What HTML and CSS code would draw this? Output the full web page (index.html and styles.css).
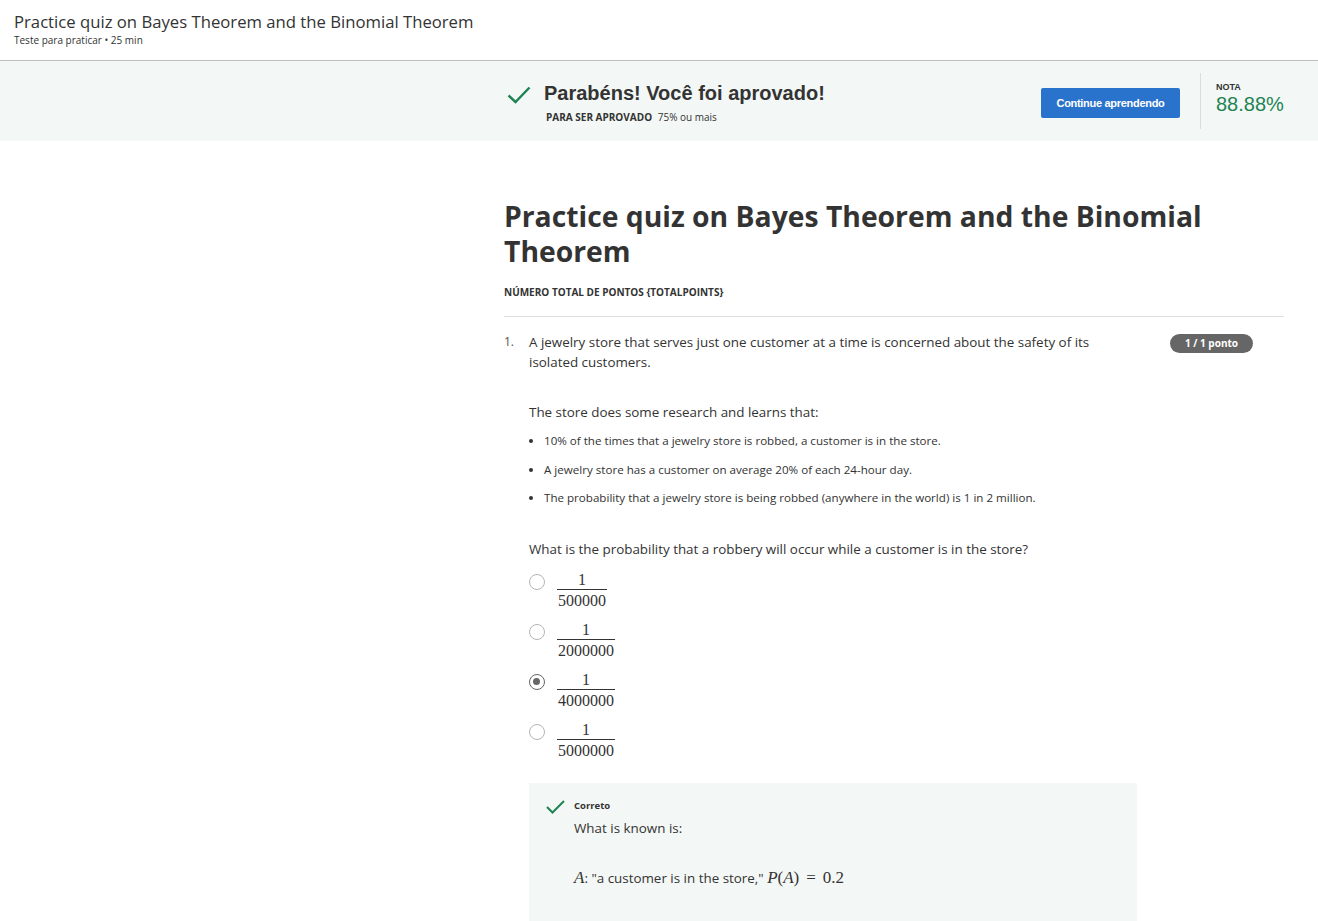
FILE: index.html
```html
<!DOCTYPE html>
<html lang="pt">
<head>
<meta charset="utf-8">
<title>Practice quiz</title>
<link rel="stylesheet" href="styles.css">
</head>
<body>
<header class="top">
  <div class="top-title">Practice quiz on Bayes Theorem and the Binomial Theorem</div>
  <div class="top-sub">Teste para praticar • 25 min</div>
</header>
<section class="banner">
  <div class="banner-inner">
    <svg class="check-big" width="24" height="18" viewBox="0 0 24 18"><path d="M1.5 9.5 L8.5 16 L22.5 1.5" fill="none" stroke="#1f8354" stroke-width="2.4"/></svg>
    <div class="banner-text">
      <div class="banner-title">Parabéns! Você foi aprovado!</div>
      <div class="banner-req"><b>PARA SER APROVADO</b> 75% ou mais</div>
    </div>
    <button class="btn">Continue aprendendo</button>
    <div class="grade">
      <div class="grade-label">NOTA</div>
      <div class="grade-value">88.88%</div>
    </div>
  </div>
</section>
<main class="main">
  <div class="content">
    <h1 class="quiz-title">Practice quiz on Bayes Theorem and the Binomial Theorem</h1>
    <div class="total">NÚMERO TOTAL DE PONTOS {TOTALPOINTS}</div>
    <div class="question">
      <div class="qnum">1.</div>
      <div class="qbody">
        <p class="qtext stem">A jewelry store that serves just one customer at a time is concerned about the safety of its isolated customers.</p>
        <p class="qtext para">The store does some research and learns that:</p>
        <ul class="facts">
          <li>10% of the times that a jewelry store is robbed, a customer is in the store.</li>
          <li>A jewelry store has a customer on average 20% of each 24-hour day.</li>
          <li>The probability that a jewelry store is being robbed (anywhere in the world) is 1 in 2 million.</li>
        </ul>
        <p class="qtext ask">What is the probability that a robbery will occur while a customer is in the store?</p>
        <div class="options">
          <div class="opt"><span class="radio"></span><span class="frac"><span class="num">1</span><span class="den">500000</span></span></div>
          <div class="opt"><span class="radio"></span><span class="frac"><span class="num">1</span><span class="den">2000000</span></span></div>
          <div class="opt"><span class="radio on"></span><span class="frac"><span class="num">1</span><span class="den">4000000</span></span></div>
          <div class="opt"><span class="radio"></span><span class="frac"><span class="num">1</span><span class="den">5000000</span></span></div>
        </div>
        <div class="feedback">
          <svg class="check-small" width="19" height="14" viewBox="0 0 19 14"><path d="M1 7 L6.5 12.5 L18 1" fill="none" stroke="#1f8354" stroke-width="2"/></svg>
          <div class="fb-body">
            <div class="fb-label">Correto</div>
            <p class="qtext fb-known">What is known is:</p>
            <p class="qtext math-line"><span class="m it">A</span>: "a customer is in the store," <span class="m"><span class="it">P</span>(<span class="it">A</span>)<span class="eq">=</span>0.2</span></p>
          </div>
        </div>
      </div>
      <div class="badge">1 / 1 ponto</div>
    </div>
  </div>
</main>
</body>
</html>
```

FILE: styles.css
```css
* { box-sizing: border-box; }
html, body { margin: 0; padding: 0; }
body {
  font-family: "Open Sans", "Liberation Sans", sans-serif;
  color: #333;
  background: #fff;
}
.top {
  height: 61px;
  padding: 11px 14px 0;
  border-bottom: 1px solid #bdbdbd;
}
.top-title {
  font-size: 16.7px;
  line-height: 22px;
  color: #333;
}
.top-sub {
  font-size: 10px;
  line-height: 14px;
  color: #333;
}
.banner {
  background: #f3f8f6;
  height: 80px;
}
.banner-inner {
  margin-left: 507px;
  width: 777px;
  height: 80px;
  display: flex;
  align-items: flex-start;
}
.check-big { margin-top: 25px; flex: none; }
.banner-text { margin-left: 13px; margin-top: 19px; flex: 1; }
.banner-title {
  font-family: "Liberation Sans", Arial, sans-serif;
  font-weight: bold;
  font-size: 20px;
  line-height: 26px;
  color: #333;
}
.banner-req {
  margin-top: 4px;
  margin-left: 2px;
  font-size: 10px;
  line-height: 14px;
  color: #333;
}
.banner-req b { margin-right: 3px; }
.btn {
  margin-top: 27px;
  width: 139px;
  height: 30px;
  background: #2a73cc;
  border: none;
  border-radius: 2px;
  color: #fff;
  font-family: "Liberation Sans", Arial, sans-serif;
  font-weight: bold;
  font-size: 11px;
  letter-spacing: -0.3px;
  padding: 0;
}
.grade {
  margin-left: 20px;
  margin-top: 12px;
  height: 56px;
  border-left: 1px solid #dcdcdc;
  padding: 8px 0 0 15px;
  width: 84px;
}
.grade-label {
  font-family: "Liberation Sans", Arial, sans-serif;
  font-weight: bold;
  font-size: 9px;
  color: #333;
  line-height: 12px;
}
.grade-value {
  font-family: "Liberation Sans", Arial, sans-serif;
  font-size: 20px;
  line-height: 22px;
  color: #1f8354;
}
.main { padding-left: 504px; }
.content { width: 780px; }
.quiz-title {
  margin: 58px 0 0;
  font-size: 28.3px;
  line-height: 35px;
  font-weight: 700;
  color: #333;
  width: 720px;
}
.total {
  margin-top: 16px;
  font-size: 10px;
  font-weight: 700;
  line-height: 14px;
  padding-bottom: 17px;
  border-bottom: 1px solid #ddd;
}
.question {
  display: flex;
  padding-top: 15px;
}
.qnum {
  width: 25px;
  font-size: 12px;
  line-height: 20px;
  color: #555;
  flex: none;
}
.qbody { width: 608px; flex: none; }
.qtext {
  margin: 0;
  font-size: 13.4px;
  line-height: 20px;
  color: #333;
}
.stem { max-width: 575px; }
.para { margin-top: 30px; }
.facts {
  margin: 11px 0 0;
  padding-left: 15px;
  font-size: 11.6px;
  line-height: 16px;
}
.facts li { margin-bottom: 12.5px; }
.ask { margin-top: 33px; }
.options { margin-top: 11px; }
.opt {
  display: flex;
  align-items: flex-start;
  height: 50px;
}
.radio {
  width: 16px;
  height: 16px;
  border-radius: 50%;
  border: 1.5px solid #b5b5b5;
  margin-top: 4px;
  flex: none;
  position: relative;
}
.radio.on { border-color: #666; }
.radio.on::after {
  content: "";
  position: absolute;
  left: 3px; top: 3px;
  width: 7px; height: 7px;
  border-radius: 50%;
  background: #666;
}
.frac {
  margin-left: 12px;
  display: inline-flex;
  flex-direction: column;
  align-items: center;
  font-family: "Liberation Serif", "DejaVu Serif", serif;
  font-size: 16px;
  line-height: 19px;
  color: #333;
}
.num { padding: 0 1px; }
.den {
  border-top: 1px solid #333;
  padding: 1px 1px 0;
}
.feedback {
  margin-top: 13px;
  background: #f3f8f6;
  width: 608px;
  height: 140px;
  display: flex;
  padding: 16px 0 0 17px;
}
.check-small { flex: none; margin-top: 1px; }
.fb-body { margin-left: 9px; }
.fb-label {
  font-size: 9.5px;
  font-weight: 700;
  line-height: 14px;
}
.fb-known { margin-top: 5px; }
.math-line { margin-top: 30px; }
.m { font-family: "Liberation Serif", "DejaVu Serif", serif; font-size: 17px; }
.it { font-style: italic; font-family: "Liberation Serif", "DejaVu Serif", serif; font-size: 17px; }
.eq { margin: 0 7px; }
.badge {
  margin-left: 33px;
  margin-top: 2px;
  width: 83px;
  height: 19px;
  border-radius: 10px;
  background: #666;
  color: #fff;
  font-size: 10px;
  font-weight: 700;
  line-height: 19px;
  text-align: center;
  flex: none;
}
```
